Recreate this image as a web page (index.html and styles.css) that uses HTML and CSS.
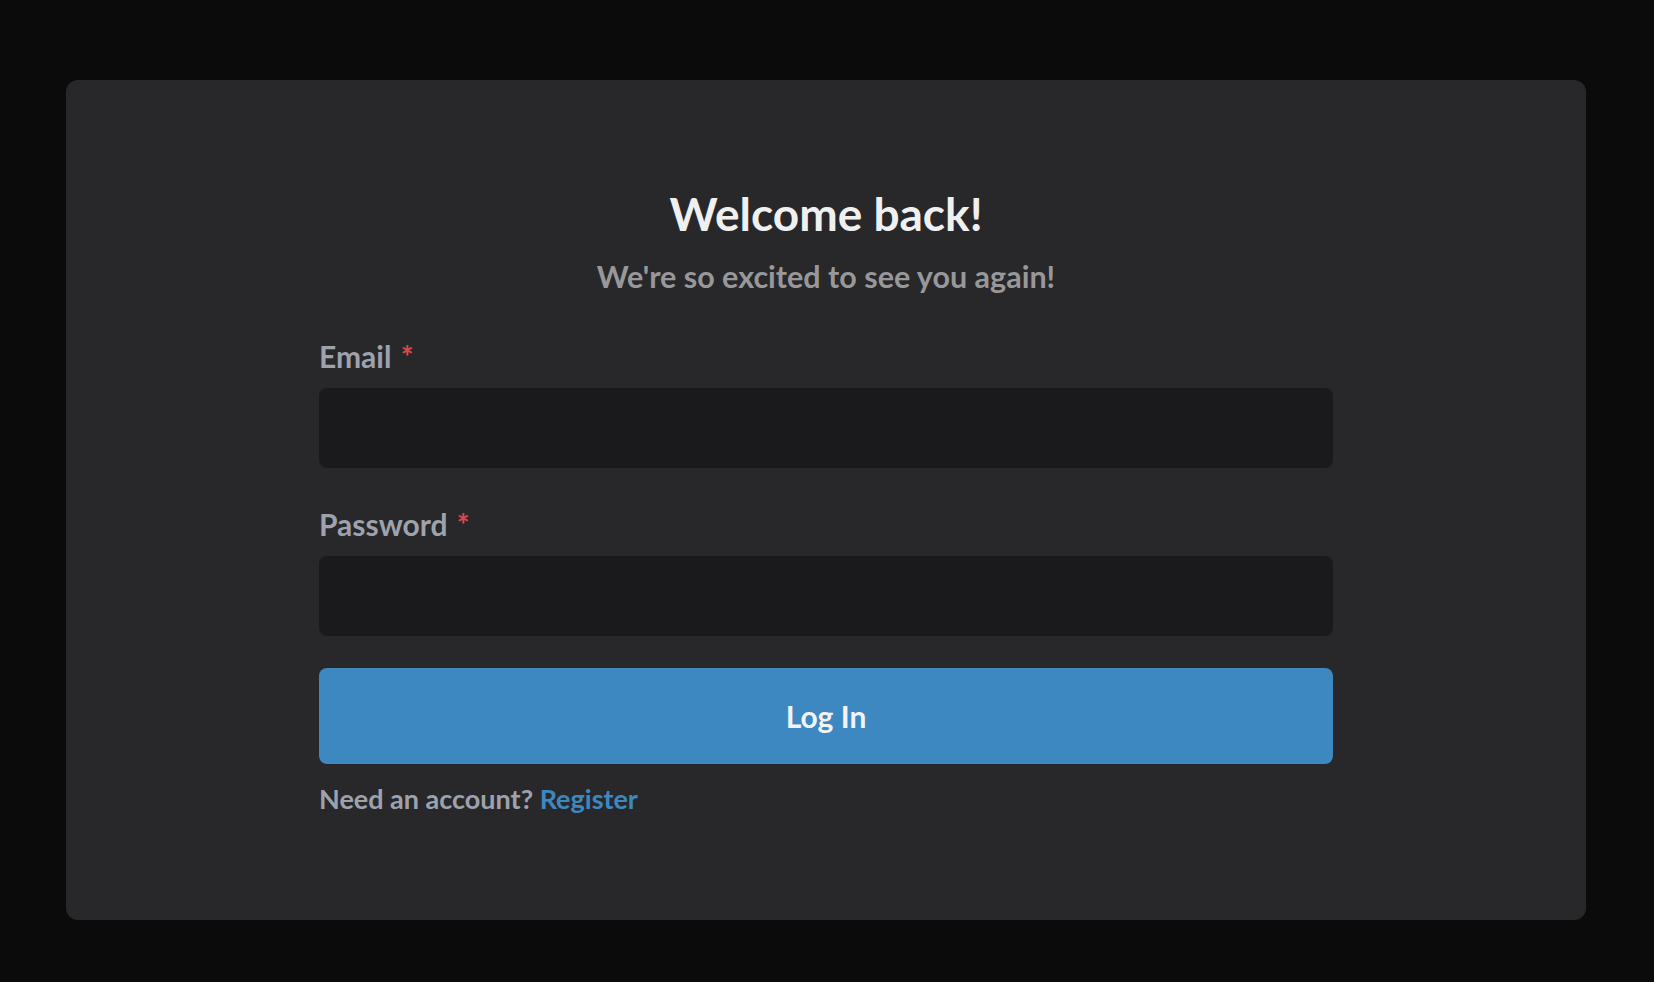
FILE: index.html
```html
<!DOCTYPE html>
<html lang="en">
<head>
<meta charset="utf-8">
<title>Login</title>
<link rel="stylesheet" href="styles.css">
</head>
<body>
<main class="card">
  <form class="form">
    <h1 class="title">Welcome back!</h1>
    <p class="subtitle">We're so excited to see you again!</p>
    <label class="label" for="email">Email <span class="req">*</span></label>
    <input class="input" id="email" type="email">
    <label class="label label-pw" for="password">Password <span class="req">*</span></label>
    <input class="input" id="password" type="password">
    <button class="btn" type="button">Log In</button>
    <p class="foot">Need an account? <a class="link" href="#">Register</a></p>
  </form>
</main>
</body>
</html>
```
FILE: styles.css
```css
* { box-sizing: border-box; }
html, body { margin: 0; height: 100%; }
body {
  background: #0b0b0c;
  font-family: Lato, "Noto Sans", sans-serif;
  padding: 80px 68px 62px 66px;
}
.card {
  background: #28282b;
  border-radius: 12px;
  height: 840px;
  padding-top: 107px;
}
.form {
  width: 1014px;
  margin: 0 auto;
  display: flex;
  flex-direction: column;
}
.title {
  margin: 0;
  text-align: center;
  font-size: 46px;
  line-height: 53px;
  font-weight: 700;
  color: #f0f0f1;
}
.subtitle {
  margin: 19px 0 0;
  text-align: center;
  font-size: 30.5px;
  line-height: 34px;
  font-weight: 700;
  color: #98989a;
}
.label {
  margin-top: 45px;
  font-size: 30px;
  line-height: 36px;
  font-weight: 700;
  color: #9ea2ad;
}
.label-pw { margin-top: 38px; }
.req { color: #e04848; font-size: 30px; vertical-align: top; margin-left: 2px; }
.input {
  margin-top: 14px;
  height: 80px;
  border: none;
  border-radius: 8px;
  background: #1a1a1c;
  outline: none;
}
.btn {
  margin-top: 32px;
  height: 96px;
  border: none;
  border-radius: 8px;
  background: #3d88c0;
  color: #f2f3f5;
  font-family: inherit;
  font-size: 30px;
  font-weight: 700;
}
.foot {
  margin: 18px 0 0;
  font-size: 27px;
  line-height: 34px;
  font-weight: 700;
  color: #9ea2ad;
}
.link { color: #3d88c0; text-decoration: none; }
```
